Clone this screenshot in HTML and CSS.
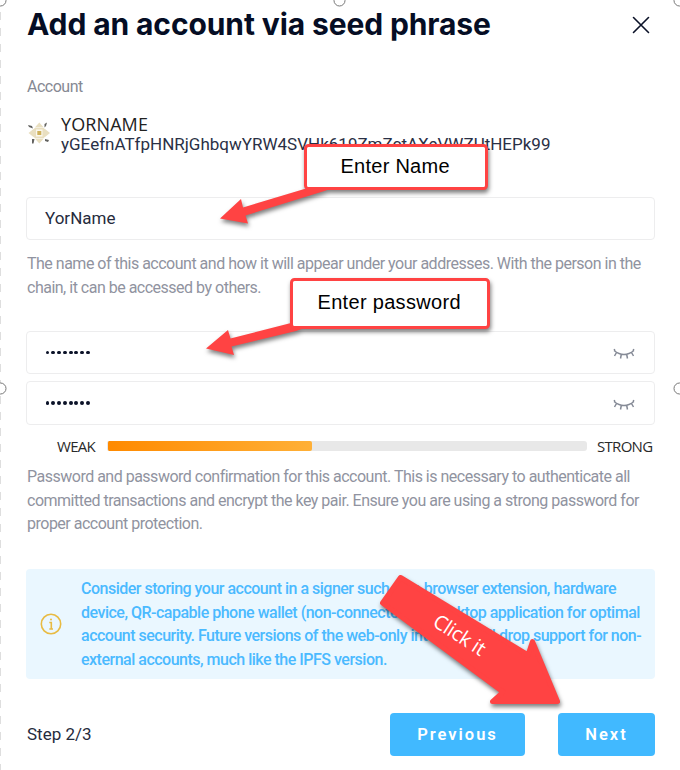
FILE: index.html
```html
<!DOCTYPE html>
<html lang="en">
<head>
<meta charset="utf-8">
<title>Add an account via seed phrase</title>
<link rel="stylesheet" href="styles.css">
</head>
<body>
<main class="modal">
  <header class="header">
    <h1 class="title">Add an account via seed phrase</h1>
    <svg class="close" width="18" height="18" viewBox="0 0 18 18"><path d="M1.5 1.5 16.5 16.5M16.5 1.5 1.5 16.5"/></svg>
  </header>
  <div class="label">Account</div>
  <section class="account">
    <svg class="avatar" width="24" height="24" viewBox="0 0 24 24">
      <path class="ink" d="M1 4 5 5 6 7.500 2 6ZM17.500 3 20 1.500 19 5 17.500 6.500ZM18 18 22 19 21 21 18 20ZM5 18 7.500 18 6.500 22.500 5 22.500Z"/>
      <path class="sand" d="M8.300 6 12.300 1.500 16.300 6ZM8.300 18 16.300 18 12.300 22.500ZM6.500 8V16L1.500 12ZM18 8V16L23 12ZM8.300 6.500H16.300L18 8.200V15.800L16.300 17.500H8.300L6.500 15.800V8.200Z"/>
      <path class="paper" d="M9 8.500H15.500V15.500H9Z"/>
      <path class="gold" d="M10.300 10H14.300V14H10.300Z"/>
    </svg>
    <div>
      <div class="name">YORNAME</div>
      <div class="address">yGEefnATfpHNRjGhbqwYRW4SVHk619ZmZctAXeVWZUtHEPk99</div>
    </div>
  </section>
  <div class="field field-name">YorName</div>
  <p class="hint hint-name">The name of this account and how it will appear under your addresses. With the person in the<br>chain, it can be accessed by others.</p>
  <div class="field field-pass">
    <span class="dots"><i></i><i></i><i></i><i></i><i></i><i></i><i></i><i></i></span>
    <svg class="eye" width="22" height="12" viewBox="0 0 22 12"><path d="M1 2.500Q11 10.500 21 2.500M3.500 4.500 1.500 8M8.300 6.500 7.500 10.500M13.700 6.500 14.500 10.500M18.500 4.500 20.500 8M1.200 1 2 3M20.800 1 20 3"/></svg>
  </div>
  <div class="field field-confirm">
    <span class="dots"><i></i><i></i><i></i><i></i><i></i><i></i><i></i><i></i></span>
    <svg class="eye" width="22" height="12" viewBox="0 0 22 12"><path d="M1 2.500Q11 10.500 21 2.500M3.500 4.500 1.500 8M8.300 6.500 7.500 10.500M13.700 6.500 14.500 10.500M18.500 4.500 20.500 8M1.200 1 2 3M20.800 1 20 3"/></svg>
  </div>
  <div class="meter">
    <span class="weak">WEAK</span>
    <div class="track"><div class="fill"></div></div>
    <span class="strong">STRONG</span>
  </div>
  <p class="hint hint-pass">Password and password confirmation for this account. This is necessary to authenticate all<br>committed transactions and encrypt the key pair. Ensure you are using a strong password for<br>proper account protection.</p>
  <aside class="notice">
    <svg class="info" width="22" height="22" viewBox="0 0 22 22"><circle cx="11" cy="11" r="9.700"/><path d="M9.300 9.500H11.300V15.700M9.300 16H13"/><circle class="tittle" cx="11" cy="6.500" r="1"/></svg>
    <p class="notice-text">Consider storing your account in a signer such as a browser extension, hardware<br>device, QR-capable phone wallet (non-connected) or desktop application for optimal<br>account security. Future versions of the web-only interface will drop support for non-<br>external accounts, much like the IPFS version.</p>
  </aside>
  <footer class="footer">
    <span class="step">Step 2/3</span>
    <button class="btn btn-prev">Previous</button>
    <button class="btn btn-next">Next</button>
  </footer>
</main>
<svg class="overlay" width="680" height="770" viewBox="0 0 680 770">
  <path class="dash" d="M0.500 12V770"/>
  <g class="handles"><circle cx="0.500" cy="0.500" r="5.500"/><circle cx="339.500" cy="0.500" r="5.500"/><circle cx="679.500" cy="0.500" r="5.500"/><circle cx="0.500" cy="388.500" r="5.500"/><circle cx="679.500" cy="388.500" r="5.500"/></g>
  <g class="callout">
    <path d="M220 218.500 241 199 243 207.500 306 188.500 306 186 334 186 326 190.500 245.500 215.500 248 223.500Z"/>
    <rect class="box" x="305.500" y="145.500" width="181" height="43" rx="3"/>
  </g>
  <g class="callout">
    <path d="M206 348.500 228 330 230.500 338.500 291 323 310 326 296 331 231.500 346.500 234 355Z"/>
    <rect class="box" x="291.500" y="279.500" width="197" height="48" rx="3"/>
  </g>
  <g class="callout">
    <path class="big" d="M400.500 577.500 528 655 532.500 641.500 557.500 701.500 492.500 701.500 503 692 382.500 603Z"/>
  </g>
  <text class="note" x="340.500" y="172.500" textLength="109">Enter Name</text>
  <text class="note" x="317.500" y="308.500" textLength="143">Enter password</text>
  <text class="click" transform="translate(431.500 625) rotate(33)" textLength="58">Click it</text>
</svg>
</body>
</html>
```
FILE: styles.css
```css
* { box-sizing: border-box; }
body {
  margin: 0;
  width: 680px;
  height: 770px;
  overflow: hidden;
  background: #fff;
  color: #262b3c;
  font-family: Roboto, sans-serif;
}
p { margin: 0; }
.modal {
  display: flex;
  flex-direction: column;
  width: 628px;
  margin-left: 27px;
}
.header {
  display: flex;
  justify-content: space-between;
  align-items: center;
  height: 50px;
  padding-right: 5px;
}
.title {
  margin: 0;
  padding-bottom: 2px;
  font: 700 30px/40px Inter, sans-serif;
  letter-spacing: -0.11px;
  color: #050d24;
  white-space: nowrap;
}
.close { fill: none; stroke: #0b1228; stroke-width: 1.6; stroke-linecap: round; }
.label {
  margin-top: 27px;
  font-size: 16px;
  letter-spacing: -0.5px;
  line-height: 20px;
  color: #868993;
}
.account {
  display: flex;
  gap: 10px;
  height: 43px;
  margin-top: 17px;
}
.avatar { margin-top: 7px; }
.sand { fill: #e9dfc0; }
.ink { fill: #62625f; }
.paper { fill: #faf7ec; }
.gold { fill: #cfb15b; }
.name {
  font: 400 18px/20px "Open Sans", sans-serif;
  letter-spacing: 0.100px;
  color: #222;
}
.address {
  font-size: 17px;
  line-height: 21px;
  color: #2a3045;
  white-space: nowrap;
}
.field {
  display: flex;
  align-items: center;
  justify-content: space-between;
  height: 43px;
  margin-left: -1px;
  padding: 0 19px 0 18px;
  border: 1px solid #ededee;
  border-radius: 4px;
  font-size: 17px;
}
.field-name { margin-top: 40px; padding-bottom: 2px; }
.field-pass { margin-top: 32px; }
.field-confirm { height: 44px; margin-top: 7px; }
.dots { display: flex; gap: 1.9px; padding-left: 0.5px; }
.dots i { width: 3.9px; height: 3.9px; border-radius: 50%; background: #0b1228; }
.eye { margin-top: 2px; fill: none; stroke: #858a96; stroke-width: 1.5; }
.field-confirm .eye { margin-top: 4px; }
.hint {
  font-size: 16px;
  letter-spacing: -0.5px;
  line-height: 23.5px;
  color: #9093a0;
  white-space: nowrap;
}
.hint-name { margin-top: 12px; }
.hint-pass { margin-top: 8px; }
.meter {
  display: flex;
  align-items: center;
  height: 22px;
  margin-top: 10px;
  padding-left: 30px;
  font: 400 15px/22px "Open Sans", sans-serif;
  letter-spacing: -0.700px;
  color: #2a2a2a;
}
.weak { width: 50px; }
.track {
  width: 480px;
  height: 10px;
  border-radius: 3px;
  background: #e8e8e8;
}
.fill {
  width: 205px;
  height: 100%;
  border: solid #e8e8e8;
  border-width: 0 0 0 1px;
  border-radius: 2px;
  background: linear-gradient(90deg, #ff8a00, #ffb037);
}
.strong { margin-left: 10px; }
.notice {
  display: flex;
  align-items: center;
  gap: 19px;
  height: 110px;
  margin-top: 33px;
  margin-left: -1px;
  padding-left: 14px;
  border-radius: 4px;
  background: #eaf7ff;
}
.info { flex: none; fill: none; stroke: #e8bb43; stroke-width: 1.6; }
.tittle { fill: #e8bb43; stroke: none; }
.notice-text {
  padding-top: 1px;
  font-size: 16px;
  font-weight: 550;
  letter-spacing: -0.500px;
  line-height: 23.500px;
  color: #4bbaff;
  white-space: nowrap;
}
.footer {
  display: flex;
  align-items: center;
  height: 43px;
  margin-top: 34px;
}
.step { width: 363px; font-size: 17px; }
.btn {
  height: 43px;
  padding: 0;
  border: 0;
  border-radius: 4px;
  background: #41b9ff;
  color: #fff;
  font: 600 16.500px/43px Roboto, sans-serif;
  letter-spacing: 2px;
}
.btn-prev { width: 135px; }
.btn-next { width: 97px; margin-left: 33px; }
.overlay { position: absolute; left: 0; top: 0; }
.dash { stroke: #dedede; stroke-dasharray: 8 8; }
.handles circle { fill: #fff; stroke: #777; stroke-width: 1; }
.callout { fill: #ff4343; filter: drop-shadow(1px 3px 2px rgba(0, 0, 0, 0.5)); }
.box { fill: #fff; stroke: #ff4343; stroke-width: 3; }
.big { stroke: #ff4343; stroke-width: 5; stroke-linejoin: round; }
.note { font: 20px "Liberation Sans", Arial, sans-serif; fill: #000; }
.click { font: 400 20px "Open Sans", sans-serif; fill: #fff; }
```
